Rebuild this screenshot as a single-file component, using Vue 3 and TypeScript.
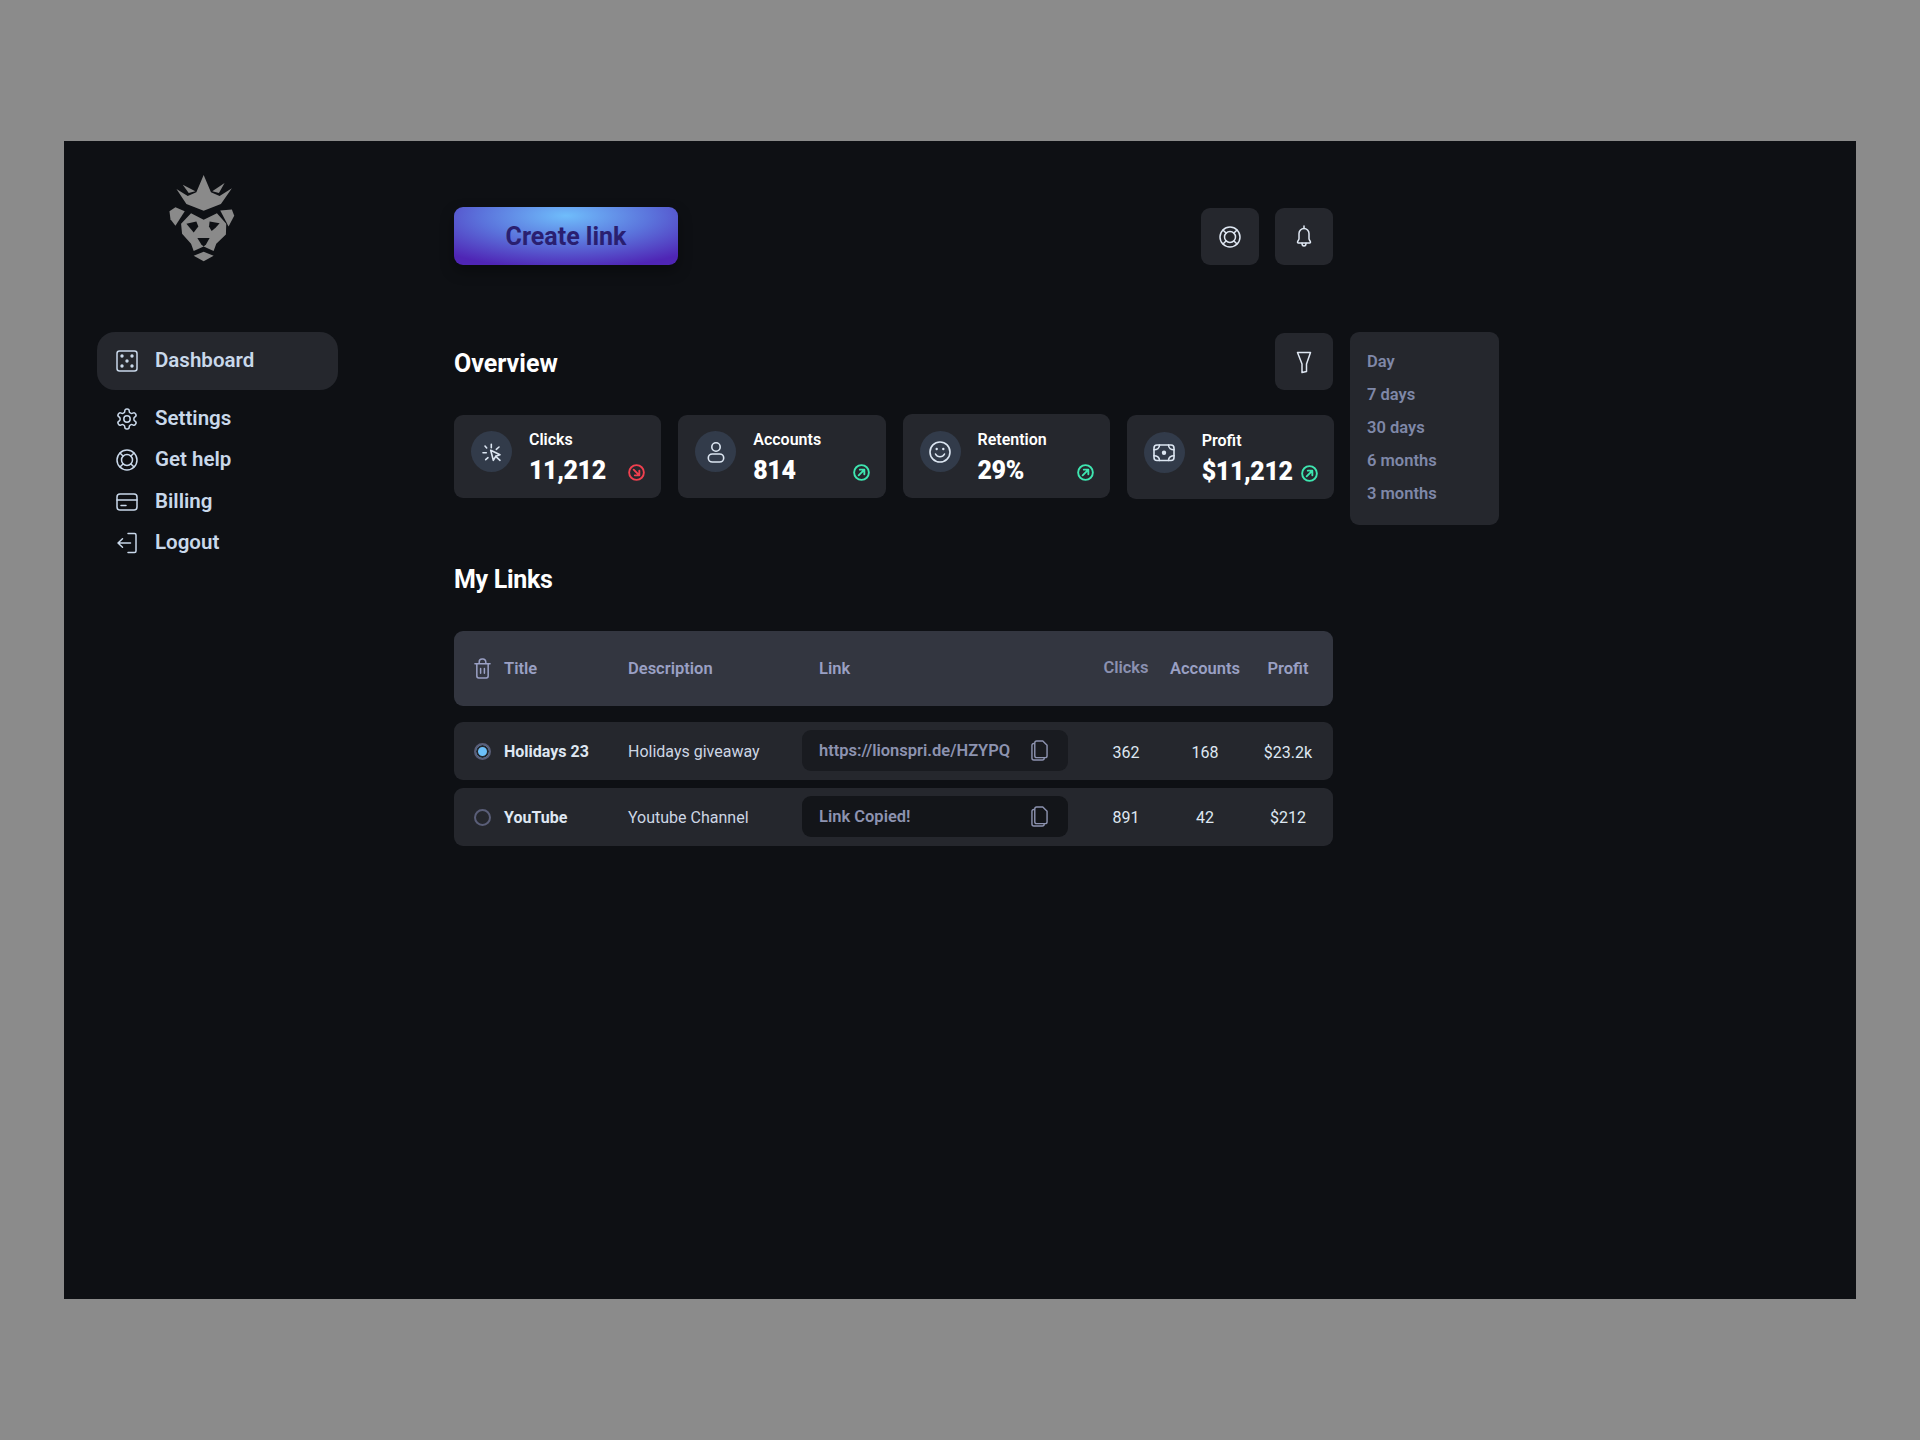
<script setup lang="ts">
interface Stat { label: string; value: string; icon: string; up: boolean; cls: string }
interface NavItem { label: string; icon: string; active?: boolean }
interface LinkRow { title: string; desc: string; link: string; clicks: string; accounts: string; profit: string; selected: boolean }

const nav: NavItem[] = [
  { label: 'Dashboard', icon: 'dice', active: true },
  { label: 'Settings', icon: 'gear' },
  { label: 'Get help', icon: 'buoy' },
  { label: 'Billing', icon: 'card' },
  { label: 'Logout', icon: 'logout' },
]
const stats: Stat[] = [
  { label: 'Clicks', value: '11,212', icon: 'click', up: false, cls: '' },
  { label: 'Accounts', value: '814', icon: 'user', up: true, cls: '' },
  { label: 'Retention', value: '29%', icon: 'smile', up: true, cls: 'tall' },
  { label: 'Profit', value: '$11,212', icon: 'cash', up: true, cls: 'low' },
]
const rows: LinkRow[] = [
  { title: 'Holidays 23', desc: 'Holidays giveaway', link: 'https://lionspri.de/HZYPQ', clicks: '362', accounts: '168', profit: '$23.2k', selected: true },
  { title: 'YouTube', desc: 'Youtube Channel', link: 'Link Copied!', clicks: '891', accounts: '42', profit: '$212', selected: false },
]
const periods: string[] = ['Day', '7 days', '30 days', '6 months', '3 months']
</script>

<template>
  <div class="page">
    <div class="frame">
      <aside class="sidebar">
        <svg class="logo" viewBox="320 100 210 265" fill="#8a8a8a">
          <polygon points="430,103 452,155 478,166 515,143 482,190 430,211 378,190 348,145 382,166 408,155" />
          <polygon points="367,132 405,152 385,157" />
          <polygon points="493,127 456,152 476,157" />
          <polygon points="327,212 345,200 373,212 345,256 330,236" />
          <polygon points="480,210 515,207 522,226 505,258" />
          <polygon points="392,218 430,238 470,218 498,250 497,282 468,310 460,332 430,318 400,332 392,310 365,280 362,250" />
          <polygon points="400,346 430,334 460,346 430,363" />
          <polygon fill="#0e1014" points="378,250 408,243 414,258 400,276 388,262" />
          <polygon fill="#0e1014" points="478,248 448,243 446,258 454,272 466,262" />
          <polygon fill="#0e1014" points="411,293 448,293 437,312 430,318 423,312" />
          <polyline fill="none" stroke="#0e1014" stroke-width="5" points="408,336 430,322 452,336" />
        </svg>
        <nav class="nav">
          <a v-for="item in nav" :key="item.label" class="nav-item" :class="{ active: item.active }">
            <svg class="nav-icon" viewBox="0 0 24 24" fill="none" stroke="currentColor" stroke-width="1.5" stroke-linecap="round" stroke-linejoin="round">
              <template v-if="item.icon === 'dice'">
                <rect x="2" y="2" width="20" height="20" rx="2.5" />
                <g fill="currentColor" stroke="none">
                  <circle cx="7" cy="7" r="1.700" /><circle cx="17" cy="7" r="1.700" /><circle cx="12" cy="12" r="1.700" />
                  <circle cx="7" cy="17" r="1.700" /><circle cx="17" cy="17" r="1.700" />
                </g>
              </template>
              <template v-else-if="item.icon === 'gear'">
                <path d="M12.22 2h-.44a2 2 0 0 0-2 2v.18a2 2 0 0 1-1 1.73l-.43.25a2 2 0 0 1-2 0l-.15-.08a2 2 0 0 0-2.73.73l-.22.38a2 2 0 0 0 .73 2.73l.15.1a2 2 0 0 1 1 1.72v.51a2 2 0 0 1-1 1.74l-.15.09a2 2 0 0 0-.73 2.73l.22.38a2 2 0 0 0 2.73.73l.15-.08a2 2 0 0 1 2 0l.43.25a2 2 0 0 1 1 1.73V20a2 2 0 0 0 2 2h.44a2 2 0 0 0 2-2v-.18a2 2 0 0 1 1-1.73l.43-.25a2 2 0 0 1 2 0l.15.08a2 2 0 0 0 2.73-.73l.22-.39a2 2 0 0 0-.73-2.73l-.15-.08a2 2 0 0 1-1-1.74v-.5a2 2 0 0 1 1-1.74l.15-.09a2 2 0 0 0 .73-2.73l-.22-.38a2 2 0 0 0-2.73-.73l-.15.08a2 2 0 0 1-2 0l-.43-.25a2 2 0 0 1-1-1.73V4a2 2 0 0 0-2-2z" />
                <circle cx="12" cy="12" r="3.200" />
              </template>
              <template v-else-if="item.icon === 'buoy'">
                <circle cx="12" cy="12" r="10" /><circle cx="12" cy="12" r="5.500" />
                <path d="M5 5l3 3M19 5l-3 3M5 19l3-3M19 19l-3-3" />
              </template>
              <template v-else-if="item.icon === 'card'">
                <rect x="2" y="4" width="20" height="16" rx="3" />
                <path d="M2 10h20M6 15.500h5" />
              </template>
              <template v-else>
                <path d="M13 2.500h6.500a1.500 1.500 0 0 1 1.500 1.500v16a1.500 1.500 0 0 1-1.500 1.500H13" />
                <path d="M15.500 12H3M7.500 7.800 3 12l4.500 4.200" />
              </template>
            </svg>
            <span class="nav-label">{{ item.label }}</span>
          </a>
        </nav>
      </aside>

      <main class="main">
        <div class="toolbar">
          <button class="create">Create link</button>
          <div class="tools">
            <button class="icon-btn">
              <svg viewBox="0 0 24 24" fill="none" stroke="currentColor" stroke-width="1.500" stroke-linecap="round">
                <circle cx="12" cy="12" r="10" /><circle cx="12" cy="12" r="5.500" />
                <path d="M5 5l3 3M19 5l-3 3M5 19l3-3M19 19l-3-3" />
              </svg>
            </button>
            <button class="icon-btn">
              <svg viewBox="0 0 24 24" fill="none" stroke="currentColor" stroke-width="1.500" stroke-linecap="round" stroke-linejoin="round">
                <path d="M12 3.500a5 5 0 0 0-5 5v5.200c0 1.400-1.500 2.200-1.500 3.600 0 .4.300.7.700.7h11.600c.4 0 .7-.3.700-.7 0-1.400-1.500-2.200-1.500-3.600V8.500a5 5 0 0 0-5-5z" />
                <path d="M12 1v2.500M10 18.200a2 2.800 0 0 0 4 0" />
              </svg>
            </button>
          </div>
        </div>

        <div class="overview-head">
          <h2 class="overview-title">Overview</h2>
          <button class="icon-btn">
            <svg viewBox="0 0 24 24" fill="none" stroke="currentColor" stroke-width="1.500" stroke-linejoin="round">
              <path d="M5.500 2.500h13l-4 11.500v7.500l-4.500 1v-8.500z" />
            </svg>
          </button>
          <ul class="menu">
            <li v-for="p in periods" :key="p">{{ p }}</li>
          </ul>
        </div>

        <section class="stats">
          <article v-for="s in stats" :key="s.label" class="stat" :class="s.cls">
            <span class="bubble">
              <svg viewBox="0 0 24 24" fill="none" stroke="currentColor" stroke-width="1.600" stroke-linecap="round" stroke-linejoin="round">
                <template v-if="s.icon === 'click'">
                  <path d="M10.700 10.300 20 14.700l-4.300 1.600-2.400 4z" />
                  <path d="M15.700 16.300 20 20.300M11.300 4.300v3.400M3 12.700h3.300M5 6l1.700 2M19 7l-2.700 2.300M5.700 19.700l2.300-2" />
                </template>
                <template v-else-if="s.icon === 'user'">
                  <circle cx="12" cy="7" r="4.200" />
                  <rect x="4.300" y="14" width="15.400" height="8" rx="4" />
                </template>
                <template v-else-if="s.icon === 'smile'">
                  <circle cx="12" cy="12" r="10" />
                  <path d="M7.500 14c1 1.900 2.600 2.800 4.500 2.800s3.500-.9 4.500-2.800" />
                  <circle cx="8.700" cy="9" r="1.200" fill="currentColor" stroke="none" />
                  <circle cx="15.300" cy="9" r="1.200" fill="currentColor" stroke="none" />
                </template>
                <template v-else>
                  <rect x="2" y="4" width="20" height="15.500" rx="3" />
                  <path d="M7.500 4c0 3-2.500 4.800-5.500 4.800M16.500 4c0 3 2.500 4.800 5.500 4.800M7.500 19.500c0-3-2.500-4.800-5.500-4.800M16.500 19.500c0-3 2.500-4.800 5.500-4.800" />
                  <circle cx="12" cy="11.700" r="1.400" fill="currentColor" />
                </template>
              </svg>
            </span>
            <div class="stat-text">
              <span class="stat-label">{{ s.label }}</span>
              <strong class="stat-value">{{ s.value }}</strong>
            </div>
            <svg class="trend" :class="s.up ? 'up' : 'down'" viewBox="0 0 18 18" fill="none" stroke="currentColor" stroke-width="2" stroke-linecap="round" stroke-linejoin="round">
              <circle cx="9" cy="9" r="7.800" />
              <path v-if="s.up" d="M6 12l6-6M7.200 6H12v4.800" />
              <path v-else d="M6 6l6 6M12 7.200V12H7.200" />
            </svg>
          </article>
        </section>

        <h2 class="links-title">My Links</h2>

        <div class="table-head cols">
          <svg class="trash" viewBox="0 0 18 22" fill="none" stroke="currentColor" stroke-width="1.600" stroke-linecap="round" stroke-linejoin="round">
            <path d="M1 6h16M3 6v13a2 2 0 0 0 2 2h8a2 2 0 0 0 2-2V6M5.500 6V4a3 3 0 0 1 3-3h1a3 3 0 0 1 3 3v2M7 11v5M11 11v5" />
          </svg>
          <span>Title</span>
          <span>Description</span>
          <span class="link-head">Link</span>
          <span class="num clicks-head">Clicks</span>
          <span class="num">Accounts</span>
          <span class="num">Profit</span>
        </div>

        <div class="rows">
          <div v-for="(r, i) in rows" :key="r.title" class="row cols" :class="{ first: i === 0 }">
            <span class="radio" :class="{ on: r.selected }"></span>
            <span class="row-title">{{ r.title }}</span>
            <span class="row-desc">{{ r.desc }}</span>
            <div class="pill">
              <span>{{ r.link }}</span>
              <svg viewBox="0 0 18 22" fill="none" stroke="currentColor" stroke-width="1.500" stroke-linejoin="round">
                <path d="M4 3.500H3a2 2 0 0 0-2 2V19a2 2 0 0 0 2 2h9a2 2 0 0 0 2-2v-.5" />
                <path d="M4 3a2 2 0 0 1 2-2h6.500L17 5.500V16.500a2 2 0 0 1-2 2H6a2 2 0 0 1-2-2z" />
              </svg>
            </div>
            <span class="num val">{{ r.clicks }}</span>
            <span class="num val">{{ r.accounts }}</span>
            <span class="num val">{{ r.profit }}</span>
          </div>
        </div>
      </main>
    </div>
  </div>
</template>

<style>
html, body { margin: 0; background: #8b8b8b; }
</style>

<style scoped>
* { box-sizing: border-box; }
.page {
  min-height: 1440px;
  padding: 141px 64px;
  font-family: Roboto, "Liberation Sans", sans-serif;
}
.frame {
  height: 1158px;
  background: #0e1014;
  display: flex;
  padding-left: 33px;
}
.sidebar { width: 241px; margin-right: 116px; padding-top: 33px; }
.logo { display: block; width: 70px; height: 88px; margin-left: 70px; margin-bottom: 70px; }
.nav { display: flex; flex-direction: column; }
.nav-item {
  display: flex;
  align-items: center;
  gap: 16px;
  height: 41.500px;
  padding-left: 18px;
  color: #c9d8ea;
  font-size: 20.500px;
  font-weight: 600;
}
.nav-label { margin-top: -2px; }
.nav-item.active {
  height: 58px;
  background: #25272d;
  border-radius: 18px;
  margin-bottom: 8px;
}
.nav-icon { width: 24px; height: 24px; flex: none; }

.main { width: 880px; padding-top: 66px; }
.toolbar { display: flex; justify-content: space-between; align-items: flex-end; height: 58px; padding-right: 1px; }
.create {
  width: 224px;
  height: 58px;
  border: 0;
  border-radius: 9px;
  background: radial-gradient(ellipse 75% 92% at 50% 15%, #6fbdfb 0%, #5b74dc 50%, #4f25b5 100%);
  color: #2a1f70;
  font: inherit;
  font-size: 25px;
  font-weight: 700;
  box-shadow: 0 6px 14px rgba(0, 0, 0, 0.35);
}
.tools { display: flex; gap: 16px; }
.icon-btn {
  width: 58px;
  height: 57px;
  padding: 0;
  border: 0;
  border-radius: 9px;
  background: #25272d;
  color: #dfe7f2;
  display: flex;
  align-items: center;
  justify-content: center;
}
.icon-btn svg { width: 24px; height: 24px; }

.overview-head {
  position: relative;
  display: flex;
  justify-content: space-between;
  align-items: center;
  height: 58px;
  margin-top: 67px;
  padding-right: 1px;
}
.overview-head .icon-btn { align-self: flex-end; }
.overview-title { padding-top: 5px; }
h2 { margin: 0; color: #fff; font-size: 25px; font-weight: 700; }
.menu {
  position: absolute;
  left: calc(100% + 16px);
  top: 0;
  width: 149px;
  height: 193px;
  margin: 0;
  padding: 13px 17px;
  list-style: none;
  background: #25272d;
  border-radius: 9px;
  color: #7f88a8;
  font-size: 16.500px;
  font-weight: 600;
}
.menu li { height: 33px; line-height: 34px; }

.stats { display: grid; grid-template-columns: repeat(4, 1fr); gap: 17px; margin-top: 25px; }
.stat {
  display: flex;
  align-items: flex-start;
  height: 83px;
  padding: 16px 16px 17px 17px;
  background: #25272d;
  border-radius: 9px;
}
.stat.tall { margin-top: -1px; height: 84px; padding-top: 17px; }
.stat.low { height: 84px; padding-top: 17px; }
.bubble {
  flex: none;
  width: 41px;
  height: 41px;
  border-radius: 50%;
  background: #323b4a;
  color: #dce6f2;
  display: flex;
  align-items: center;
  justify-content: center;
}
.bubble svg { width: 24px; height: 24px; }
.stat-text { display: flex; flex-direction: column; margin-left: 17px; margin-top: -2px; }
.stat-label { color: #fff; font-size: 16px; font-weight: 600; line-height: 22px; }
.stat-value { color: #fff; font-size: 25px; font-weight: 900; line-height: 34px; letter-spacing: -0.400px; margin-top: 3px; }
.trend { width: 17px; height: 17px; margin-left: auto; align-self: flex-end; }
.trend.up { color: #3ee6b0; }
.trend.down { color: #f0404f; }

.links-title { margin-top: 64px; line-height: 34px; letter-spacing: -0.300px; }
.cols {
  display: grid;
  grid-template-columns: 30px 124px 174px 284px 80px 78px 88px;
  align-items: center;
  padding-left: 20px;
  margin-right: 1px;
}
.table-head {
  margin-top: 34px;
  height: 75px;
  background: #333640;
  border-radius: 9px;
  color: #9aa0c4;
  font-size: 16.500px;
  font-weight: 600;
}
.trash { width: 17px; height: 21px; }
.link-head { padding-left: 17px; }
.clicks-head { margin-top: -2px; color: #8b91b0; }
.num { text-align: center; }

.rows { display: flex; flex-direction: column; gap: 8px; margin-top: 16px; }
.row { height: 58px; background: #25272d; border-radius: 9px; font-size: 16px; }
.radio {
  width: 17px;
  height: 17px;
  border: 2px solid #5a5e78;
  border-radius: 50%;
}
.radio.on { background: #6cc0fa; box-shadow: inset 0 0 0 2px #25272d; }
.row-title { color: #dfe7f2; font-weight: 700; }
.row-desc { color: #cdd6e4; }
.pill {
  width: 266px;
  height: 41px;
  margin-bottom: 1px;
  padding: 0 20px 0 17px;
  background: #131519;
  border-radius: 9px;
  color: #8d93b0;
  font-size: 16.500px;
  font-weight: 600;
  display: flex;
  align-items: center;
  justify-content: space-between;
}
.first .pill { background: #191b20; }
.pill svg { width: 17px; height: 21px; flex: none; }
.val { color: #dfe7f2; font-weight: 400; }
.first .val { padding-top: 3px; }
</style>
